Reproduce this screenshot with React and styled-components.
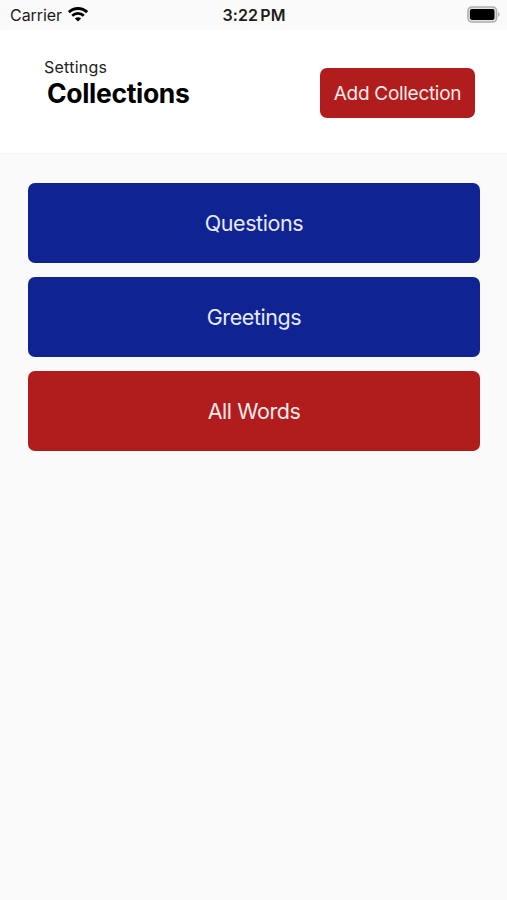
import React from 'react'
import styled, { createGlobalStyle, ThemeProvider } from 'styled-components'

const theme = {
	primary: '#102393',
	accent: '#b11d1d',
	background: '#fafafa',
	white: '#ffffff',
	text: '#000000',
}

const GlobalStyle = createGlobalStyle`
	* {
		box-sizing: border-box;
	}

	body {
		margin: 0;
		font-family: Inter, 'Liberation Sans', sans-serif;
		background: ${({ theme }) => theme.background};
	}
`

const Screen = styled.div`
	display: flex;
	flex-direction: column;
	min-height: 100vh;
	background: ${({ theme }) => theme.background};
`

const StatusBar = styled.div`
	display: grid;
	grid-template-columns: 1fr auto 1fr;
	align-items: center;
	height: 30px;
	padding: 0 7px 0 10px;
	color: #1c1c1c;
`

const StatusCarrier = styled.div`
	display: flex;
	align-items: center;
	gap: 6px;
	font-size: 16px;
	line-height: 30px;
	letter-spacing: -0.05px;

	svg {
		margin-top: -1px;
	}
`

const StatusTime = styled.div`
	margin-right: 2px;
	font-size: 16px;
	font-weight: 600;
	line-height: 30px;
	letter-spacing: 0.1px;
	word-spacing: -2px;
`

const StatusBattery = styled.div`
	display: flex;
	justify-content: flex-end;
	height: 17px;
	margin-top: -2px;
`

const Header = styled.header`
	display: flex;
	justify-content: space-between;
	align-items: flex-start;
	height: 124px;
	padding: 28px 32px 0 44px;
	border-bottom: 1px solid #f4f4f4;
	background: ${({ theme }) => theme.white};
`

const Titles = styled.div`
	display: flex;
	flex-direction: column;
`

const BackLink = styled.a`
	margin-bottom: 2px;
	font-size: 16px;
	line-height: 18px;
	letter-spacing: 0.25px;
	color: #222;
`

const Title = styled.h1`
	margin: 0 0 0 3px;
	font-size: 26.5px;
	font-weight: 700;
	line-height: 30px;
	letter-spacing: -0.32px;
	color: ${({ theme }) => theme.text};
`

const Button = styled.button`
	display: flex;
	justify-content: center;
	align-items: center;
	padding: 0;
	border: none;
	font-family: inherit;
	color: #fbeaea;
	background: ${({ theme }) => theme.accent};
`

const AddButton = styled(Button)`
	width: 155px;
	height: 50px;
	margin-top: 10px;
	border-radius: 7px;
	font-size: 19px;
	letter-spacing: -0.3px;
`

const List = styled.main`
	display: flex;
	flex-direction: column;
	gap: 14px;
	padding: 29px 27px 0 28px;
`

const CollectionButton = styled(Button)`
	height: 80px;
	border-radius: 7px;
	font-size: 21.5px;
	letter-spacing: -0.42px;
	color: ${({ $all }) => ($all ? '#fbeaea' : '#e6eafc')};
	background: ${({ $all, theme }) => ($all ? theme.accent : theme.primary)};
`

const collections = [
	{ name: 'Questions' },
	{ name: 'Greetings' },
	{ name: 'All Words', all: true },
]

const WifiIcon = () => (
	<svg width="20" height="15" viewBox="0 0 20 15" fill="none" stroke="#000">
		<path d="M0.9 5.1C6 0.3 14 0.3 19.1 5.1" strokeWidth="2.9" />
		<path d="M4.2 8.7C7.5 5.6 12.5 5.6 15.8 8.7" strokeWidth="2.7" />
		<path d="M10 14.4L6.9 11.5C8.7 9.9 11.3 9.9 13.1 11.5Z" fill="#000" stroke="none" />
	</svg>
)

const BatteryIcon = () => (
	<svg width="33" height="17" viewBox="0 0 33 17">
		<rect x="0.9" y="0.9" width="28.7" height="15.2" rx="4.2" fill="#e2e2e2" stroke="#aeaeae" strokeWidth="1.5" />
		<rect x="2.9" y="3.1" width="24.6" height="10.8" rx="1.8" fill="#000" />
		<path d="M31 6v4.8c1.1-.4 1.7-1.3 1.7-2.4S32.1 6.4 31 6z" fill="#b8b8b8" />
	</svg>
)

const App = () => {
	return (
		<ThemeProvider theme={theme}>
			<GlobalStyle />
			<Screen>
				<StatusBar>
					<StatusCarrier>
						Carrier
						<WifiIcon />
					</StatusCarrier>
					<StatusTime>3:22 PM</StatusTime>
					<StatusBattery>
						<BatteryIcon />
					</StatusBattery>
				</StatusBar>
				<Header>
					<Titles>
						<BackLink>Settings</BackLink>
						<Title>Collections</Title>
					</Titles>
					<AddButton>Add Collection</AddButton>
				</Header>
				<List>
					{collections.map(({ name, all }) => (
						<CollectionButton key={name} $all={all}>
							{name}
						</CollectionButton>
					))}
				</List>
			</Screen>
		</ThemeProvider>
	)
}

export default App
